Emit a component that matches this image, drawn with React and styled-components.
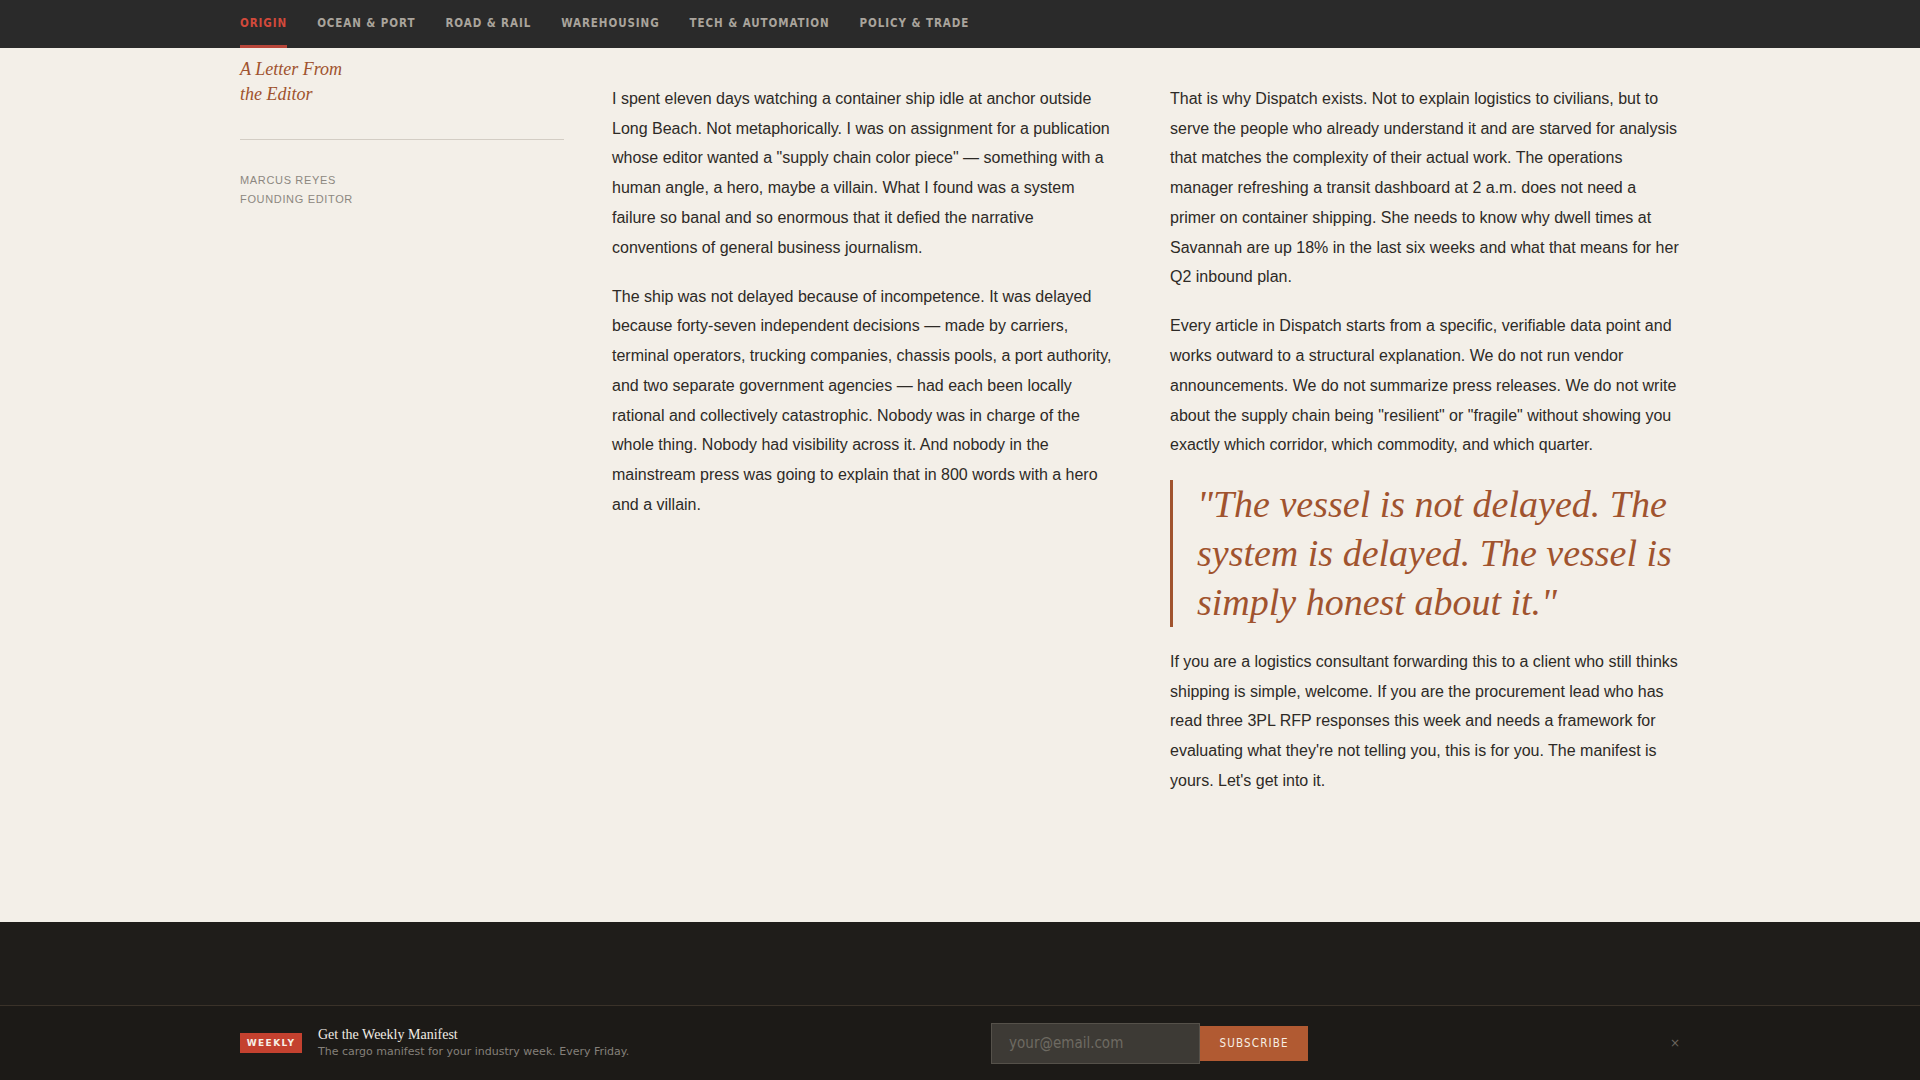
import React from 'react';
import styled, { createGlobalStyle } from 'styled-components';

const GlobalStyle = createGlobalStyle`
  html, body {
    margin: 0;
    padding: 0;
    background: #f3efe8;
  }
  body {
    font-family: "Liberation Sans", Arial, sans-serif;
    color: #2d2a26;
  }
  * {
    box-sizing: border-box;
  }
`;

const labelFont = `"DejaVu Sans Condensed", "Liberation Sans", sans-serif`;

const TopBar = styled.nav`
  position: sticky;
  top: 0;
  z-index: 10;
  height: 48px;
  background: #2a2a2a;
`;

const TopBarInner = styled.ul`
  max-width: 1440px;
  height: 100%;
  margin: 0 auto;
  padding: 0;
  list-style: none;
  display: flex;
  gap: 30px;
`;

const NavItem = styled.li`
  display: flex;
  align-items: center;
  height: 100%;
  border-bottom: 3px solid ${(p) => (p.$active ? '#b8463a' : 'transparent')};
  font-family: ${labelFont};
  font-weight: 700;
  font-size: 11.5px;
  letter-spacing: 0.08em;
  text-transform: uppercase;
  color: ${(p) => (p.$active ? '#d2493b' : '#a9a49c')};
`;

const Page = styled.main`
  max-width: 1440px;
  margin: 0 auto;
  padding-bottom: 107px;
  display: grid;
  grid-template-columns: 324px 1fr 1fr;
  column-gap: 48px;
  align-items: start;
`;

const Sidebar = styled.aside`
  padding-top: 9px;
`;

const SideTitle = styled.h2`
  margin: 0;
  font-family: "Liberation Serif", "Times New Roman", serif;
  font-style: italic;
  font-weight: 400;
  font-size: 18px;
  line-height: 25px;
  color: #a0532e;
`;

const Rule = styled.hr`
  margin: 32px 0 31px;
  border: 0;
  border-top: 1px solid #d3cdc4;
`;

const Byline = styled.div`
  font-size: 11px;
  line-height: 19px;
  letter-spacing: 0.06em;
  text-transform: uppercase;
  color: #8c8780;
`;

const Column = styled.div`
  padding-top: 36px;
`;

const Para = styled.p`
  margin: 0 0 19.5px;
  font-size: 16px;
  line-height: 29.7px;
  color: #2d2a26;
`;

const PullQuote = styled.blockquote`
  margin: 20px 0;
  padding: 0 0 0 24px;
  border-left: 3px solid #a0532e;
  font-family: "Liberation Serif", "Times New Roman", serif;
  font-style: italic;
  font-size: 38px;
  line-height: 49px;
  color: #a0532e;
`;

const SiteFooter = styled.footer`
  min-height: 160px;
  background: #1f1d1a;
`;

const Signup = styled.div`
  position: fixed;
  left: 0;
  right: 0;
  bottom: 0;
  height: 75px;
  background: #1c1a17;
  border-top: 1px solid #3a3229;
`;

const SignupInner = styled.div`
  max-width: 1440px;
  height: 100%;
  margin: 0 auto;
  display: flex;
  align-items: center;
  justify-content: space-between;
`;

const SignupText = styled.div`
  display: flex;
  align-items: center;
  gap: 16px;
`;

const Badge = styled.span`
  display: inline-flex;
  align-items: center;
  justify-content: center;
  width: 62px;
  height: 20px;
  background: #c4412f;
  color: #f6efe6;
  font-family: "DejaVu Sans", sans-serif;
  font-weight: 700;
  font-size: 9px;
  letter-spacing: 0.16em;
`;

const SignupTitle = styled.div`
  font-family: "Liberation Serif", "Times New Roman", serif;
  font-size: 14px;
  line-height: 18px;
  color: #f1ece4;
`;

const SignupSub = styled.div`
  font-family: "DejaVu Sans", sans-serif;
  font-size: 11px;
  line-height: 16px;
  color: #85807a;
`;

const Form = styled.form`
  display: flex;
  align-items: center;
`;

const EmailInput = styled.input`
  width: 209px;
  height: 41px;
  padding: 0 17px;
  background: #3d3a35;
  border: 1px solid #55514a;
  color: #e8e2d8;
  font-family: ${labelFont};
  font-size: 15px;
  outline: none;

  &::placeholder {
    color: #6e6a62;
  }
`;

const SubscribeButton = styled.button`
  width: 108px;
  height: 35px;
  border: 0;
  background: #b15a32;
  color: #f7efe4;
  font-family: ${labelFont};
  font-weight: 400;
  font-size: 11.5px;
  letter-spacing: 0.1em;
  cursor: pointer;
`;

const Dismiss = styled.button`
  padding: 0;
  border: 0;
  background: none;
  color: #6b665e;
  font-family: "DejaVu Sans", sans-serif;
  font-size: 12px;
  cursor: pointer;
`;

const sections = ['Origin', 'Ocean & Port', 'Road & Rail', 'Warehousing', 'Tech & Automation', 'Policy & Trade'];

const App = () => (
  <>
    <GlobalStyle />
    <TopBar>
      <TopBarInner>
        {sections.map((s, i) => (
          <NavItem key={s} $active={i === 0}>{s}</NavItem>
        ))}
      </TopBarInner>
    </TopBar>

    <Page>
      <Sidebar>
        <SideTitle>
          A Letter From
          <br />
          the Editor
        </SideTitle>
        <Rule />
        <Byline>Marcus Reyes</Byline>
        <Byline>Founding Editor</Byline>
      </Sidebar>

      <Column>
        <Para>
          I spent eleven days watching a container ship idle at anchor outside Long Beach. Not metaphorically. I was
          on assignment for a publication whose editor wanted a &quot;supply chain color piece&quot; — something with a
          human angle, a hero, maybe a villain. What I found was a system failure so banal and so enormous that it
          defied the narrative conventions of general business journalism.
        </Para>
        <Para>
          The ship was not delayed because of incompetence. It was delayed because forty-seven independent decisions —
          made by carriers, terminal operators, trucking companies, chassis pools, a port authority, and two separate
          government agencies — had each been locally rational and collectively catastrophic. Nobody was in charge of
          the whole thing. Nobody had visibility across it. And nobody in the mainstream press was going to explain
          that in 800 words with a hero and a villain.
        </Para>
      </Column>

      <Column>
        <Para>
          That is why Dispatch exists. Not to explain logistics to civilians, but to serve the people who already
          understand it and are starved for analysis that matches the complexity of their actual work. The operations
          manager refreshing a transit dashboard at 2 a.m. does not need a primer on container shipping. She needs to
          know why dwell times at Savannah are up 18% in the last six weeks and what that means for her Q2 inbound
          plan.
        </Para>
        <Para>
          Every article in Dispatch starts from a specific, verifiable data point and works outward to a structural
          explanation. We do not run vendor announcements. We do not summarize press releases. We do not write about
          the supply chain being &quot;resilient&quot; or &quot;fragile&quot; without showing you exactly which
          corridor, which commodity, and which quarter.
        </Para>
        <PullQuote>
          &quot;The vessel is not delayed. The system is delayed. The vessel is simply honest about it.&quot;
        </PullQuote>
        <Para>
          If you are a logistics consultant forwarding this to a client who still thinks shipping is simple, welcome.
          If you are the procurement lead who has read three 3PL RFP responses this week and needs a framework for
          evaluating what they&apos;re not telling you, this is for you. The manifest is yours. Let&apos;s get into it.
        </Para>
      </Column>
    </Page>

    <SiteFooter />

    <Signup>
      <SignupInner>
        <SignupText>
          <Badge>WEEKLY</Badge>
          <div>
            <SignupTitle>Get the Weekly Manifest</SignupTitle>
            <SignupSub>The cargo manifest for your industry week. Every Friday.</SignupSub>
          </div>
        </SignupText>
        <Form onSubmit={(e) => e.preventDefault()}>
          <EmailInput type="email" placeholder="your@email.com" />
          <SubscribeButton type="submit">SUBSCRIBE</SubscribeButton>
        </Form>
        <Dismiss type="button" aria-label="Close">×</Dismiss>
      </SignupInner>
    </Signup>
  </>
);

export default App;
